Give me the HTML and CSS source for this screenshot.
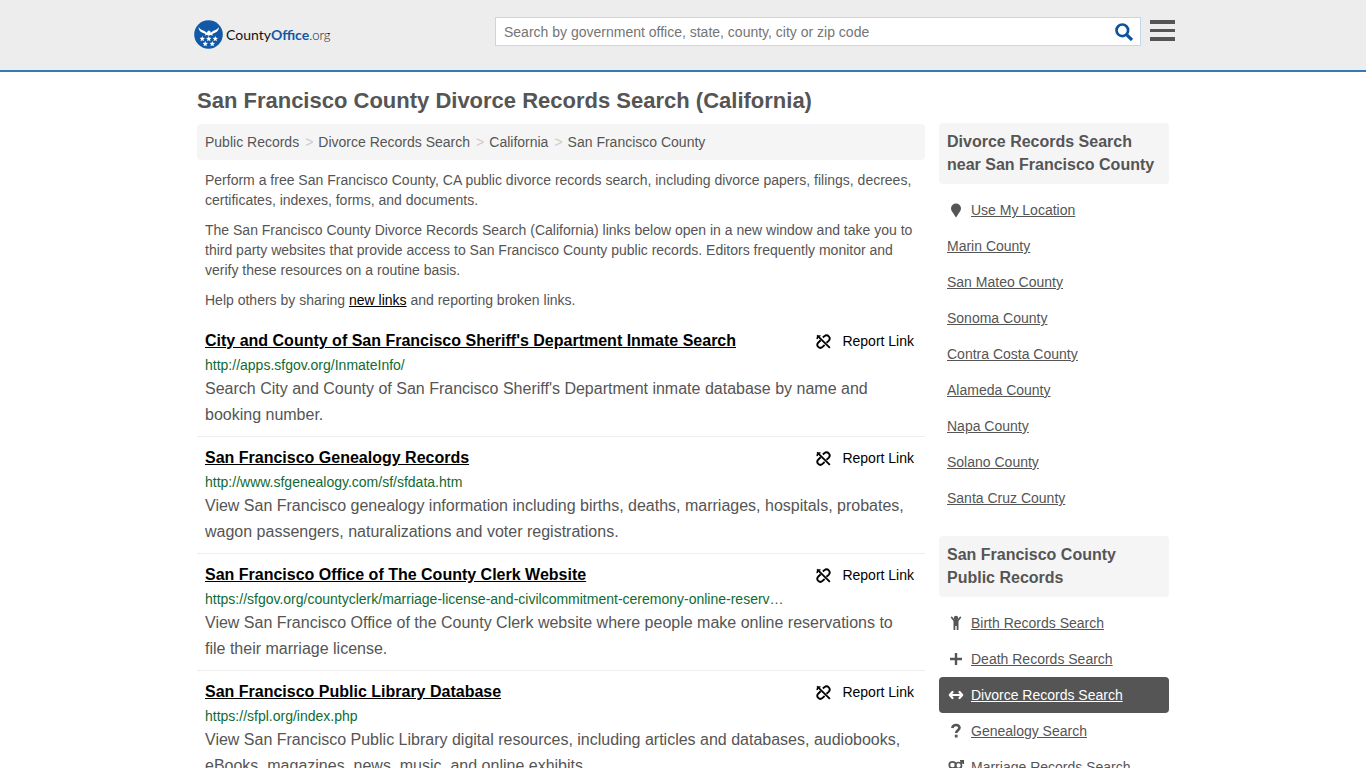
FILE: index.html
```html
<!DOCTYPE html>
<html lang="en">
<head>
<meta charset="utf-8">
<meta name="viewport" content="width=device-width, initial-scale=1">
<title>San Francisco County Divorce Records Search (California)</title>
<link rel="stylesheet" href="styles.css">
</head>
<body>
<svg class="defs" aria-hidden="true">
  <symbol id="unlink" viewBox="0 0 16 16">
    <g fill="none" stroke="currentColor" stroke-width="2">
      <path d="M1.200 1.500 14.800 14.800"/>
      <path d="M7.300 3.700 8.800 2.500c1.500-1.300 3.600-1.200 4.800.1 1.300 1.400 1.200 3.400-.1 4.700L11.200 9.400"/>
      <path d="M5 6.700 2.500 9.100c-1.300 1.300-1.400 3.300-.1 4.700 1.300 1.300 3.300 1.200 4.600-.1L9.200 11.800"/>
      <path d="M1.300 5.500C1 3.500 2 2.200 4.800 1.700" stroke-width="1.500"/>
    </g>
  </symbol>
  <symbol id="star" viewBox="0 0 10 10"><path fill="#fff" d="M5 0 6.300 3.300 10 3.700 7.200 6 8.100 9.700 5 7.700 1.900 9.700 2.800 6 0 3.700l3.700-.4z"/></symbol>
</svg>

<header class="site-header">
  <div class="header-inner">
    <a class="logo" href="#">
      <svg class="logo-mark" viewBox="0 0 30 30" aria-hidden="true">
        <circle cx="14.500" cy="14.500" r="14.300" fill="#1159a6"/>
        <path fill="#fff" d="M4.500 7C6 9.300 8 10 10 10.700l2.900 2 .9-1.600 1.200-.5 1.300.6.300 1.500 2.800-2c2-.7 4-1.400 5.600-3.700-.2 2.800-1.500 4.600-3.500 5.600L18.200 14l.9 1.500-2.500-.5-1.700.8-1.900-.8-2.300.5.900-1.500L8 12.600C6 11.600 4.700 9.800 4.500 7z"/>
        <use href="#star" x="5.500" y="16" width="5.500" height="5.500"/>
        <use href="#star" x="12" y="16" width="5.500" height="5.500"/>
        <use href="#star" x="18.500" y="16" width="5.500" height="5.500"/>
        <use href="#star" x="8.500" y="21" width="5.500" height="5.500"/>
        <use href="#star" x="15.500" y="21" width="5.500" height="5.500"/>
      </svg>
      <span class="logo-text">County<b>Office</b><small>.org</small></span>
    </a>
    <form class="search" role="search">
      <input class="search-input" type="text" aria-label="Search" placeholder="Search by government office, state, county, city or zip code">
      <button class="search-button" type="button" aria-label="Search">
        <svg viewBox="0 0 18 18" width="18" height="18" aria-hidden="true"><g fill="none" stroke="#0d529f"><circle cx="7.300" cy="7.300" r="5.800" stroke-width="2.700"/><path d="m11.800 11.800 5.200 5.200" stroke-width="3.200"/></g></svg>
      </button>
    </form>
    <button class="menu-button" type="button" aria-label="Menu">
      <svg viewBox="0 0 25 22" width="25" height="22" aria-hidden="true"><path fill="#555" d="M0 0h25v4H0zM0 9h25v3H0zM0 17h25v4H0z"/></svg>
    </button>
  </div>
</header>

<div class="page">
  <h1>San Francisco County Divorce Records Search (California)</h1>
  <div class="columns">
    <main class="main">
      <nav class="breadcrumb" aria-label="Breadcrumb">
        <a href="#">Public Records</a><span>&gt;</span><a href="#">Divorce Records Search</a><span>&gt;</span><a href="#">California</a><span>&gt;</span><a href="#">San Francisco County</a>
      </nav>
      <div class="intro">
        <p>Perform a free San Francisco County, CA public divorce records search, including divorce papers, filings, decrees, certificates, indexes, forms, and documents.</p>
        <p>The San Francisco County Divorce Records Search (California) links below open in a new window and take you to third party websites that provide access to San Francisco County public records. Editors frequently monitor and verify these resources on a routine basis.</p>
        <p>Help others by sharing <a href="#">new links</a> and reporting broken links.</p>
      </div>
      <article class="result">
        <div class="result-head"><h2><a href="#">City and County of San Francisco Sheriff's Department Inmate Search</a></h2><a class="report" href="#"><svg aria-hidden="true"><use href="#unlink"/></svg>Report Link</a></div>
        <div class="url">http://apps.sfgov.org/InmateInfo/</div>
        <p class="description">Search City and County of San Francisco Sheriff's Department inmate database by name and booking number.</p>
      </article>
      <article class="result">
        <div class="result-head"><h2><a href="#">San Francisco Genealogy Records</a></h2><a class="report" href="#"><svg aria-hidden="true"><use href="#unlink"/></svg>Report Link</a></div>
        <div class="url">http://www.sfgenealogy.com/sf/sfdata.htm</div>
        <p class="description">View San Francisco genealogy information including births, deaths, marriages, hospitals, probates, wagon passengers, naturalizations and voter registrations.</p>
      </article>
      <article class="result">
        <div class="result-head"><h2><a href="#">San Francisco Office of The County Clerk Website</a></h2><a class="report" href="#"><svg aria-hidden="true"><use href="#unlink"/></svg>Report Link</a></div>
        <div class="url">https://sfgov.org/countyclerk/marriage-license-and-civilcommitment-ceremony-online-reserv…</div>
        <p class="description">View San Francisco Office of the County Clerk website where people make online reservations to file their marriage license.</p>
      </article>
      <article class="result">
        <div class="result-head"><h2><a href="#">San Francisco Public Library Database</a></h2><a class="report" href="#"><svg aria-hidden="true"><use href="#unlink"/></svg>Report Link</a></div>
        <div class="url">https://sfpl.org/index.php</div>
        <p class="description">View San Francisco Public Library digital resources, including articles and databases, audiobooks, eBooks, magazines, news, music, and online exhibits.</p>
      </article>
    </main>

    <aside class="sidebar">
      <section>
        <h2>Divorce Records Search near San Francisco County</h2>
        <ul>
          <li><a href="#"><svg viewBox="0 0 16 16" aria-hidden="true"><path fill="currentColor" d="M8 1.500a5 5 0 0 1 5 5c0 2.300-2 4.200-3.300 6.500L8 15.500 6.300 13C5 10.700 3 8.800 3 6.500a5 5 0 0 1 5-5z"/></svg><span>Use My Location</span></a></li>
          <li><a href="#"><span>Marin County</span></a></li>
          <li><a href="#"><span>San Mateo County</span></a></li>
          <li><a href="#"><span>Sonoma County</span></a></li>
          <li><a href="#"><span>Contra Costa County</span></a></li>
          <li><a href="#"><span>Alameda County</span></a></li>
          <li><a href="#"><span>Napa County</span></a></li>
          <li><a href="#"><span>Solano County</span></a></li>
          <li><a href="#"><span>Santa Cruz County</span></a></li>
        </ul>
      </section>
      <section>
        <h2>San Francisco County Public Records</h2>
        <ul>
          <li><a href="#"><svg viewBox="0 0 16 16" aria-hidden="true"><circle cx="8" cy="3" r="2.200" fill="currentColor"/><path fill="none" stroke="currentColor" stroke-width="1.800" stroke-linecap="round" d="m3.700 2.500 3 3.500h2.600l3-3.500"/><path fill="currentColor" d="M5.500 5.500h5V15H8.700v-4H7.300v4H5.500z"/></svg><span>Birth Records Search</span></a></li>
          <li><a href="#"><svg viewBox="0 0 16 16" aria-hidden="true"><path fill="currentColor" d="M6.800 2h2.400v4.800H14v2.400H9.200V14H6.800V9.200H2V6.800h4.800z"/></svg><span>Death Records Search</span></a></li>
          <li><a class="current" href="#" aria-current="page"><svg viewBox="0 0 16 16" aria-hidden="true"><path fill="none" stroke="currentColor" stroke-width="2.200" stroke-linecap="round" stroke-linejoin="round" d="M4.500 5 1.800 8l2.700 3M11.500 5l2.700 3-2.700 3M2.500 8h11"/></svg><span>Divorce Records Search</span></a></li>
          <li><a href="#"><svg viewBox="0 0 16 16" aria-hidden="true"><path fill="none" stroke="currentColor" stroke-width="2.600" d="M4.200 5C4.800 2.500 6.500 2 8.200 2c2.200 0 3.300 1.400 3.300 2.800 0 2.400-3.300 2.400-3.300 5.200"/><path fill="currentColor" d="M6.800 11.700h2.800v2.800H6.800z"/></svg><span>Genealogy Search</span></a></li>
          <li><a href="#"><svg viewBox="0 0 16 16" aria-hidden="true"><g fill="none" stroke="currentColor" stroke-width="1.700"><circle cx="4.500" cy="6" r="3.200"/><circle cx="10.500" cy="6.500" r="3"/><path d="M4.500 9.500V15M2.500 12.500h4M12.500 4.500 15 2M12 1.800h3.200V5"/></g></svg><span>Marriage Records Search</span></a></li>
        </ul>
      </section>
    </aside>
  </div>
</div>
</body>
</html>
```
FILE: styles.css
```css
* { box-sizing: border-box; }

html { overflow-x: hidden; }

body {
  margin: 0;
  background: #fff;
  color: #555;
  font: 14px/20px "Liberation Sans", Arial, sans-serif;
}

h1, h2, p, ul { margin: 0; padding: 0; }
ul { list-style: none; }
button { padding: 0; border: 0; background: none; cursor: pointer; }
button svg { display: block; }
.defs { display: none; }

.site-header {
  padding: 0 16px;
  background: #ededed;
  border-bottom: 2px solid #337ab7;
}

.header-inner {
  display: flex;
  align-items: center;
  max-width: 984px;
  height: 70px;
  margin: 0 auto;
  padding: 0 0 8px 3px;
}

.logo {
  display: flex;
  align-items: center;
  gap: 2px;
  padding-top: 8px;
  color: #111;
  text-decoration: none;
}
.logo-mark { width: 30px; height: 30px; }
.logo-text { font: 14px/20px Lato, sans-serif; }
.logo-text b { color: #1159a6; }
.logo-text small { font-size: 13px; font-weight: 300; }

.search {
  display: flex;
  flex: 0 1 646px;
  height: 29px;
  margin-left: auto;
  background: #fff;
  border: 1px solid #c3d7e8;
}
.search-input {
  flex: 1;
  min-width: 0;
  padding: 2px 8px 0;
  border: 0;
  background: none;
  color: #555;
  font: inherit;
}
.search-input::placeholder { color: #757575; }
.search-button { padding: 2px 7px 0; }
.menu-button { margin-left: 9px; }

.page {
  max-width: 1004px;
  margin: 0 auto;
  padding: 17px 16px 40px;
}

h1 { font-size: 22px; line-height: 24px; }

.columns {
  display: flex;
  gap: 14px;
  margin-top: 10px;
}
.main { flex: 1; min-width: 0; padding-top: 1px; }
.sidebar { flex: 0 0 230px; }

.breadcrumb {
  padding: 8px;
  border-radius: 4px;
  background: #f5f5f5;
}
.breadcrumb a { color: #555; text-decoration: none; }
.breadcrumb span { padding: 0 5px 0 6px; color: #ccc; }

.intro { padding: 10px 8px 0; }
.intro p { margin-bottom: 10px; }
.intro a { color: #000; }

.result {
  padding: 8px;
  border-bottom: 1px solid #eee;
}
.result-head {
  display: flex;
  justify-content: space-between;
  line-height: 26px;
}
.result h2 { font-size: 16px; }
.result h2 a { color: #000; }
.report {
  display: flex;
  align-items: center;
  gap: 11px;
  padding-right: 3px;
  color: #000;
  text-decoration: none;
}
.report svg { width: 15px; height: 15px; }
.url { color: #0f6b33; line-height: 22px; }
.description { font-size: 16px; line-height: 26px; }

.sidebar h2 {
  margin-bottom: 8px;
  padding: 7px 8px 8px;
  border-radius: 4px;
  background: #f5f5f5;
  font-size: 16px;
  line-height: 23px;
}
.sidebar section { margin-bottom: 20px; }
.sidebar li a {
  display: flex;
  align-items: center;
  gap: 6px;
  padding: 8px;
  border-radius: 4px;
  color: #555;
}
.sidebar li svg { width: 18px; height: 16px; }
.sidebar li .current { background: #555; color: #fff; }
```
